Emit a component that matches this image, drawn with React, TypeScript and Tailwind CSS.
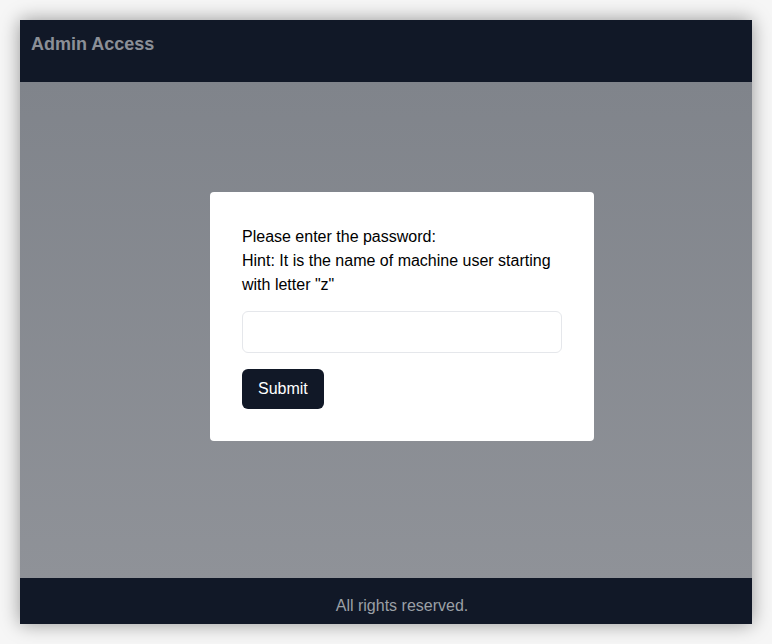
export default function App() {
  return (
    <div className="w-[772px] h-[644px] bg-[#f6f6f6] p-[20px]" style={{ fontFamily: '"Liberation Sans", Arial, sans-serif' }}>
      <div className="flex flex-col w-[732px] h-[604px] shadow-[0_0_18px_rgba(0,0,0,0.4)]">
        <header className="h-[62px] bg-[#111827] px-[11px] pt-[10px]">
          <h1 className="text-lg leading-7 font-bold text-[#8b8f97]">Admin Access</h1>
        </header>
        <main className="flex-1 flex items-center justify-center bg-gradient-to-b from-[#80848b] to-[#8f9298]">
          <div className="w-[384px] bg-white rounded p-8 pt-[33px] ml-[32px] mt-[-28px]">
            <p className="text-base leading-6 text-black">
              Please enter the password:
              <br />
              Hint: It is the name of machine user starting with letter "z"
            </p>
            <input
              type="password"
              className="mt-[14px] block w-full h-[42px] border border-gray-200 rounded-md px-3 outline-none"
            />
            <button className="mt-4 px-4 h-10 bg-[#111827] text-white text-base rounded-md">Submit</button>
          </div>
        </main>
        <footer className="h-[46px] bg-[#111827] pt-[16px] pl-8 text-center">
          <p className="text-base leading-6 text-[#9ca0a6]">All rights reserved.</p>
        </footer>
      </div>
    </div>
  )
}
